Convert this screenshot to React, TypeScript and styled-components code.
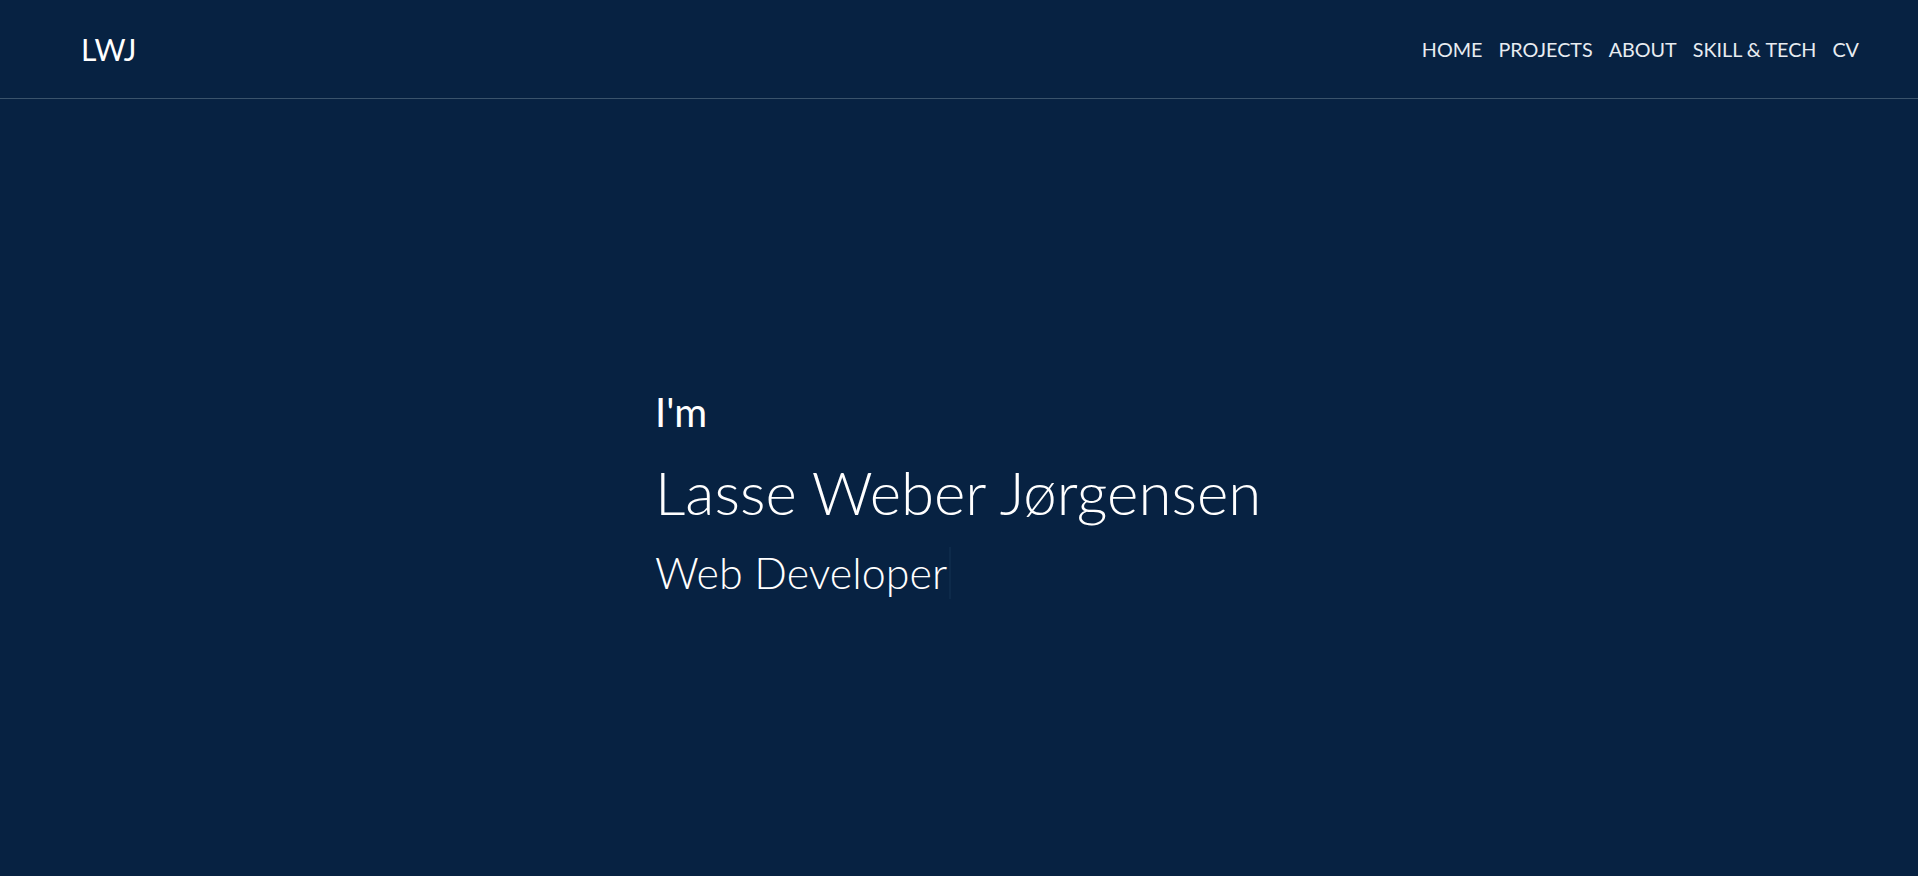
import React from "react";
import styled, { createGlobalStyle } from "styled-components";

const GlobalStyle = createGlobalStyle`
  html, body { margin: 0; padding: 0; background: #072242; }
  body { font-family: "Lato", "Liberation Sans", sans-serif; }
  * { box-sizing: border-box; }
`;

const Page = styled.div`
  min-height: 876px;
  background: #072242;
  color: #ffffff;
  display: flex;
  flex-direction: column;
`;

const Header = styled.header`
  height: 99px;
  display: flex;
  align-items: center;
  justify-content: space-between;
  padding: 0 59px 0 81px;
  border-bottom: 1px solid #3a536b;
`;

const Logo = styled.a`
  font-family: "Lato", sans-serif;
  font-size: 30px;
  font-weight: 400;
  color: #ffffff;
  text-decoration: none;
`;

const Nav = styled.nav`
  display: flex;
  gap: 16px;
`;

const NavLink = styled.a`
  font-family: "Lato", sans-serif;
  font-size: 19.75px;
  color: #e8ecf1;
  text-decoration: none;
`;

const Hero = styled.main`
  flex: 1;
  display: flex;
  align-items: center;
  justify-content: center;
`;

const HeroInner = styled.div`
  width: 608px;
  margin: 20px 0 9px;
  font-family: "Lato", sans-serif;
`;

const Intro = styled.h3`
  margin: 0;
  font-size: 40px;
  font-weight: 400;
  line-height: 48px;
`;

const Name = styled.h1`
  margin: 20px 0 0;
  font-size: 60px;
  font-weight: 300;
  line-height: 72px;
  white-space: nowrap;
`;

const Role = styled.h2`
  margin: 19px 0 0;
  font-size: 43px;
  font-weight: 300;
  line-height: 52px;
  display: inline-block;
  padding-right: 2px;
  border-right: 2px solid #0d2a4a;
`;

const links = ["HOME", "PROJECTS", "ABOUT", "SKILL & TECH", "CV"];

export default function App() {
  return (
    <Page>
      <GlobalStyle />
      <Header>
        <Logo href="#">LWJ</Logo>
        <Nav>
          {links.map((l) => (
            <NavLink key={l} href="#">{l}</NavLink>
          ))}
        </Nav>
      </Header>
      <Hero>
        <HeroInner>
          <Intro>I'm</Intro>
          <Name>Lasse Weber Jørgensen</Name>
          <Role>Web Developer</Role>
        </HeroInner>
      </Hero>
    </Page>
  );
}
